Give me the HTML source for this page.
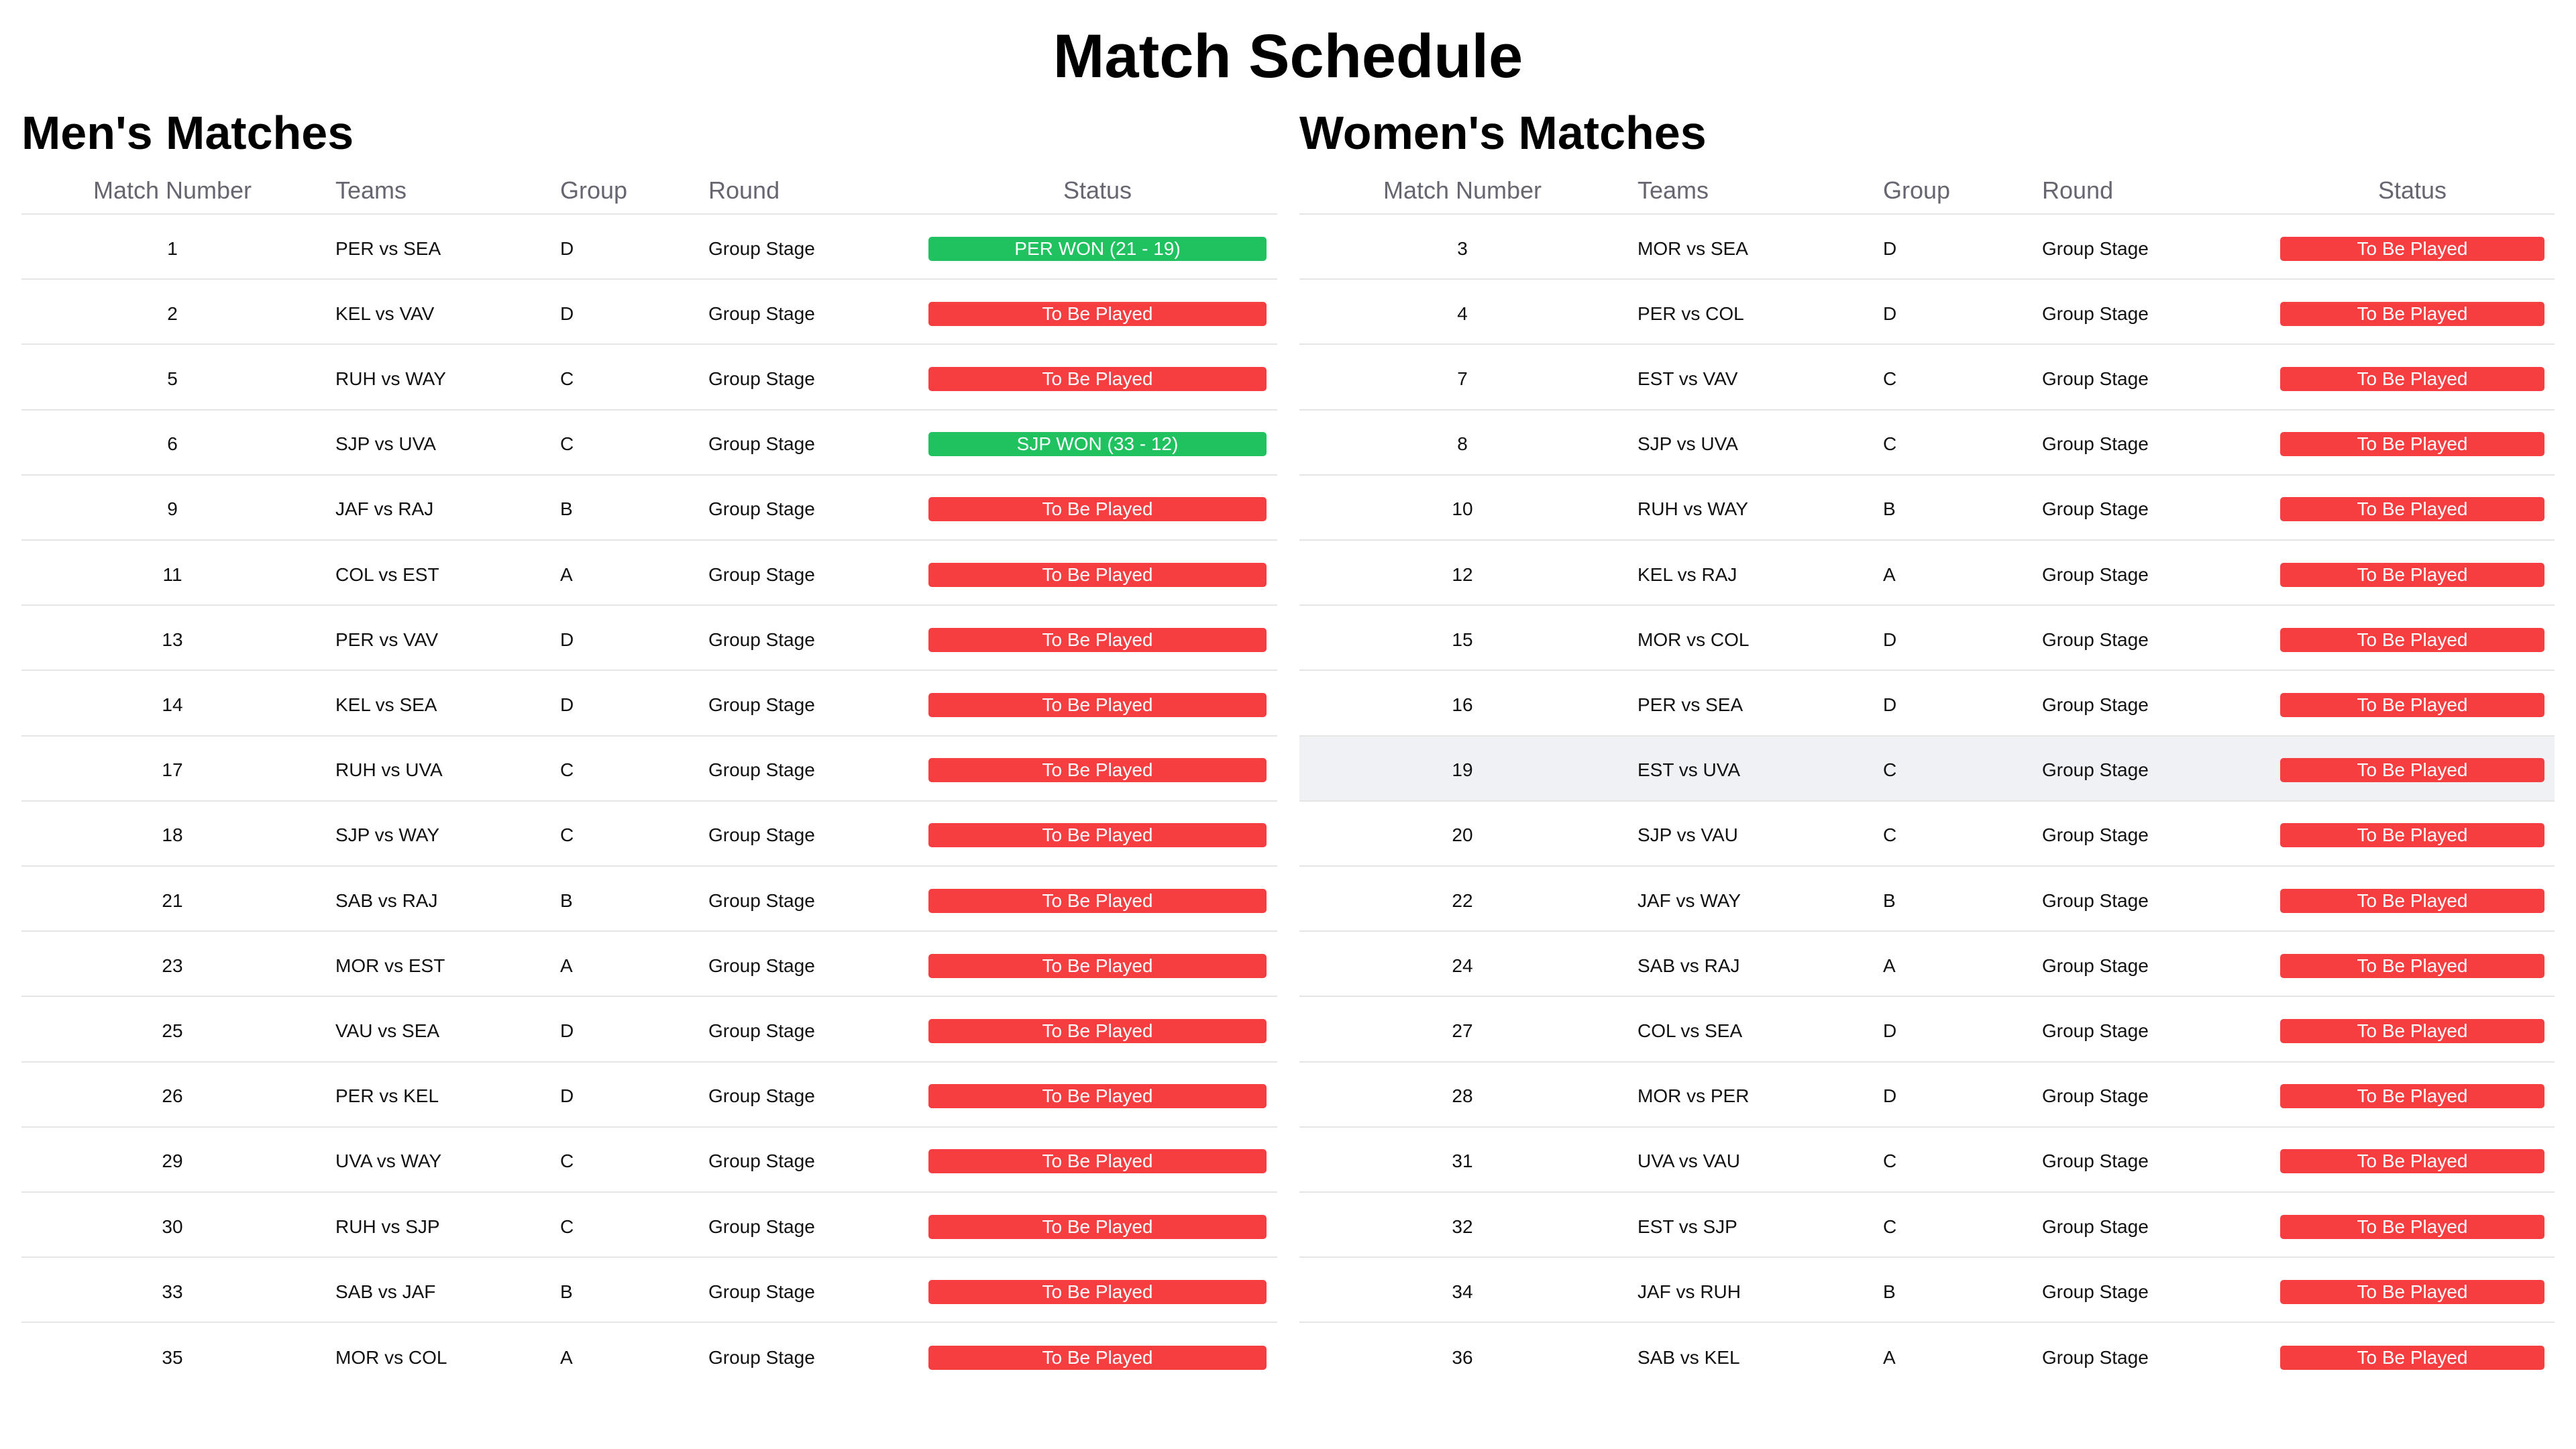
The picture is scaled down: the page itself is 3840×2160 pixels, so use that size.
<!DOCTYPE html>
<html><head><meta charset="utf-8">
<style>
*{margin:0;padding:0;box-sizing:border-box}
body{width:3840px;height:2160px;background:#fff;font-family:"Liberation Sans",Arial,sans-serif;color:#111;position:relative;overflow:hidden}
h1{position:absolute;left:0;width:3840px;top:32px;text-align:center;font-size:92px;font-weight:bold;color:#000}
h2{position:absolute;top:158px;font-size:70px;font-weight:bold;color:#000}
.t{position:absolute;top:250px}
.hd,.r{position:absolute;left:0;display:flex;align-items:center}
.hd{top:0;height:70px;border-bottom:2px solid #e5e5e5;color:#666670;font-size:36px}
.r{height:97.2px;border-bottom:2px solid #e5e5e5;font-size:28px;padding-top:6px}
.r.last{border-bottom:none}
.r.hl{background:#f0f1f4}
.c{flex:none;padding-left:18px;white-space:nowrap}
.c1{text-align:center;padding-left:0}
.b{display:block;height:36px;line-height:36px;color:#fff;border-radius:5px;font-size:28px;text-align:center}
.g{background:#1fc25f}.x{background:#f63d3f}
</style></head><body>
<h1>Match Schedule</h1>
<h2 style="left:32px">Men's Matches</h2>
<h2 style="left:1937px">Women's Matches</h2>
<div class="t" style="left:32px;width:1872px">
 <div class="hd" style="width:1872px">
  <div class="c c1" style="width:450px">Match Number</div>
  <div class="c" style="width:335px">Teams</div>
  <div class="c" style="width:221px">Group</div>
  <div class="c" style="width:328px">Round</div>
  <div class="c" style="width:538px;padding-right:16px;text-align:center">Status</div>
 </div>
</div>
<div class="t" style="left:1937px;width:1871px">
 <div class="hd" style="width:1871px">
  <div class="c c1" style="width:486px">Match Number</div>
  <div class="c" style="width:366px">Teams</div>
  <div class="c" style="width:237px">Group</div>
  <div class="c" style="width:355px">Round</div>
  <div class="c" style="width:427px;padding-right:15px;text-align:center">Status</div>
 </div>
</div>
<div class="t" style="left:32px;top:320px;width:1872px">
<div class="r" style="top:0.0px;width:1872px"><div class="c c1" style="width:450px">1</div><div class="c" style="width:335px">PER vs SEA</div><div class="c" style="width:221px">D</div><div class="c" style="width:328px">Group Stage</div><div class="c" style="width:538px;padding-right:16px"><span class="b g">PER WON (21 - 19)</span></div></div>
<div class="r" style="top:97.2px;width:1872px"><div class="c c1" style="width:450px">2</div><div class="c" style="width:335px">KEL vs VAV</div><div class="c" style="width:221px">D</div><div class="c" style="width:328px">Group Stage</div><div class="c" style="width:538px;padding-right:16px"><span class="b x">To Be Played</span></div></div>
<div class="r" style="top:194.4px;width:1872px"><div class="c c1" style="width:450px">5</div><div class="c" style="width:335px">RUH vs WAY</div><div class="c" style="width:221px">C</div><div class="c" style="width:328px">Group Stage</div><div class="c" style="width:538px;padding-right:16px"><span class="b x">To Be Played</span></div></div>
<div class="r" style="top:291.6px;width:1872px"><div class="c c1" style="width:450px">6</div><div class="c" style="width:335px">SJP vs UVA</div><div class="c" style="width:221px">C</div><div class="c" style="width:328px">Group Stage</div><div class="c" style="width:538px;padding-right:16px"><span class="b g">SJP WON (33 - 12)</span></div></div>
<div class="r" style="top:388.8px;width:1872px"><div class="c c1" style="width:450px">9</div><div class="c" style="width:335px">JAF vs RAJ</div><div class="c" style="width:221px">B</div><div class="c" style="width:328px">Group Stage</div><div class="c" style="width:538px;padding-right:16px"><span class="b x">To Be Played</span></div></div>
<div class="r" style="top:486.0px;width:1872px"><div class="c c1" style="width:450px">11</div><div class="c" style="width:335px">COL vs EST</div><div class="c" style="width:221px">A</div><div class="c" style="width:328px">Group Stage</div><div class="c" style="width:538px;padding-right:16px"><span class="b x">To Be Played</span></div></div>
<div class="r" style="top:583.2px;width:1872px"><div class="c c1" style="width:450px">13</div><div class="c" style="width:335px">PER vs VAV</div><div class="c" style="width:221px">D</div><div class="c" style="width:328px">Group Stage</div><div class="c" style="width:538px;padding-right:16px"><span class="b x">To Be Played</span></div></div>
<div class="r" style="top:680.4px;width:1872px"><div class="c c1" style="width:450px">14</div><div class="c" style="width:335px">KEL vs SEA</div><div class="c" style="width:221px">D</div><div class="c" style="width:328px">Group Stage</div><div class="c" style="width:538px;padding-right:16px"><span class="b x">To Be Played</span></div></div>
<div class="r" style="top:777.6px;width:1872px"><div class="c c1" style="width:450px">17</div><div class="c" style="width:335px">RUH vs UVA</div><div class="c" style="width:221px">C</div><div class="c" style="width:328px">Group Stage</div><div class="c" style="width:538px;padding-right:16px"><span class="b x">To Be Played</span></div></div>
<div class="r" style="top:874.8px;width:1872px"><div class="c c1" style="width:450px">18</div><div class="c" style="width:335px">SJP vs WAY</div><div class="c" style="width:221px">C</div><div class="c" style="width:328px">Group Stage</div><div class="c" style="width:538px;padding-right:16px"><span class="b x">To Be Played</span></div></div>
<div class="r" style="top:972.0px;width:1872px"><div class="c c1" style="width:450px">21</div><div class="c" style="width:335px">SAB vs RAJ</div><div class="c" style="width:221px">B</div><div class="c" style="width:328px">Group Stage</div><div class="c" style="width:538px;padding-right:16px"><span class="b x">To Be Played</span></div></div>
<div class="r" style="top:1069.2px;width:1872px"><div class="c c1" style="width:450px">23</div><div class="c" style="width:335px">MOR vs EST</div><div class="c" style="width:221px">A</div><div class="c" style="width:328px">Group Stage</div><div class="c" style="width:538px;padding-right:16px"><span class="b x">To Be Played</span></div></div>
<div class="r" style="top:1166.4px;width:1872px"><div class="c c1" style="width:450px">25</div><div class="c" style="width:335px">VAU vs SEA</div><div class="c" style="width:221px">D</div><div class="c" style="width:328px">Group Stage</div><div class="c" style="width:538px;padding-right:16px"><span class="b x">To Be Played</span></div></div>
<div class="r" style="top:1263.6px;width:1872px"><div class="c c1" style="width:450px">26</div><div class="c" style="width:335px">PER vs KEL</div><div class="c" style="width:221px">D</div><div class="c" style="width:328px">Group Stage</div><div class="c" style="width:538px;padding-right:16px"><span class="b x">To Be Played</span></div></div>
<div class="r" style="top:1360.8px;width:1872px"><div class="c c1" style="width:450px">29</div><div class="c" style="width:335px">UVA vs WAY</div><div class="c" style="width:221px">C</div><div class="c" style="width:328px">Group Stage</div><div class="c" style="width:538px;padding-right:16px"><span class="b x">To Be Played</span></div></div>
<div class="r" style="top:1458.0px;width:1872px"><div class="c c1" style="width:450px">30</div><div class="c" style="width:335px">RUH vs SJP</div><div class="c" style="width:221px">C</div><div class="c" style="width:328px">Group Stage</div><div class="c" style="width:538px;padding-right:16px"><span class="b x">To Be Played</span></div></div>
<div class="r" style="top:1555.2px;width:1872px"><div class="c c1" style="width:450px">33</div><div class="c" style="width:335px">SAB vs JAF</div><div class="c" style="width:221px">B</div><div class="c" style="width:328px">Group Stage</div><div class="c" style="width:538px;padding-right:16px"><span class="b x">To Be Played</span></div></div>
<div class="r last" style="top:1652.4px;width:1872px"><div class="c c1" style="width:450px">35</div><div class="c" style="width:335px">MOR vs COL</div><div class="c" style="width:221px">A</div><div class="c" style="width:328px">Group Stage</div><div class="c" style="width:538px;padding-right:16px"><span class="b x">To Be Played</span></div></div>
</div>
<div class="t" style="left:1937px;top:320px;width:1871px">
<div class="r" style="top:0.0px;width:1871px"><div class="c c1" style="width:486px">3</div><div class="c" style="width:366px">MOR vs SEA</div><div class="c" style="width:237px">D</div><div class="c" style="width:355px">Group Stage</div><div class="c" style="width:427px;padding-right:15px"><span class="b x">To Be Played</span></div></div>
<div class="r" style="top:97.2px;width:1871px"><div class="c c1" style="width:486px">4</div><div class="c" style="width:366px">PER vs COL</div><div class="c" style="width:237px">D</div><div class="c" style="width:355px">Group Stage</div><div class="c" style="width:427px;padding-right:15px"><span class="b x">To Be Played</span></div></div>
<div class="r" style="top:194.4px;width:1871px"><div class="c c1" style="width:486px">7</div><div class="c" style="width:366px">EST vs VAV</div><div class="c" style="width:237px">C</div><div class="c" style="width:355px">Group Stage</div><div class="c" style="width:427px;padding-right:15px"><span class="b x">To Be Played</span></div></div>
<div class="r" style="top:291.6px;width:1871px"><div class="c c1" style="width:486px">8</div><div class="c" style="width:366px">SJP vs UVA</div><div class="c" style="width:237px">C</div><div class="c" style="width:355px">Group Stage</div><div class="c" style="width:427px;padding-right:15px"><span class="b x">To Be Played</span></div></div>
<div class="r" style="top:388.8px;width:1871px"><div class="c c1" style="width:486px">10</div><div class="c" style="width:366px">RUH vs WAY</div><div class="c" style="width:237px">B</div><div class="c" style="width:355px">Group Stage</div><div class="c" style="width:427px;padding-right:15px"><span class="b x">To Be Played</span></div></div>
<div class="r" style="top:486.0px;width:1871px"><div class="c c1" style="width:486px">12</div><div class="c" style="width:366px">KEL vs RAJ</div><div class="c" style="width:237px">A</div><div class="c" style="width:355px">Group Stage</div><div class="c" style="width:427px;padding-right:15px"><span class="b x">To Be Played</span></div></div>
<div class="r" style="top:583.2px;width:1871px"><div class="c c1" style="width:486px">15</div><div class="c" style="width:366px">MOR vs COL</div><div class="c" style="width:237px">D</div><div class="c" style="width:355px">Group Stage</div><div class="c" style="width:427px;padding-right:15px"><span class="b x">To Be Played</span></div></div>
<div class="r" style="top:680.4px;width:1871px"><div class="c c1" style="width:486px">16</div><div class="c" style="width:366px">PER vs SEA</div><div class="c" style="width:237px">D</div><div class="c" style="width:355px">Group Stage</div><div class="c" style="width:427px;padding-right:15px"><span class="b x">To Be Played</span></div></div>
<div class="r hl" style="top:777.6px;width:1871px"><div class="c c1" style="width:486px">19</div><div class="c" style="width:366px">EST vs UVA</div><div class="c" style="width:237px">C</div><div class="c" style="width:355px">Group Stage</div><div class="c" style="width:427px;padding-right:15px"><span class="b x">To Be Played</span></div></div>
<div class="r" style="top:874.8px;width:1871px"><div class="c c1" style="width:486px">20</div><div class="c" style="width:366px">SJP vs VAU</div><div class="c" style="width:237px">C</div><div class="c" style="width:355px">Group Stage</div><div class="c" style="width:427px;padding-right:15px"><span class="b x">To Be Played</span></div></div>
<div class="r" style="top:972.0px;width:1871px"><div class="c c1" style="width:486px">22</div><div class="c" style="width:366px">JAF vs WAY</div><div class="c" style="width:237px">B</div><div class="c" style="width:355px">Group Stage</div><div class="c" style="width:427px;padding-right:15px"><span class="b x">To Be Played</span></div></div>
<div class="r" style="top:1069.2px;width:1871px"><div class="c c1" style="width:486px">24</div><div class="c" style="width:366px">SAB vs RAJ</div><div class="c" style="width:237px">A</div><div class="c" style="width:355px">Group Stage</div><div class="c" style="width:427px;padding-right:15px"><span class="b x">To Be Played</span></div></div>
<div class="r" style="top:1166.4px;width:1871px"><div class="c c1" style="width:486px">27</div><div class="c" style="width:366px">COL vs SEA</div><div class="c" style="width:237px">D</div><div class="c" style="width:355px">Group Stage</div><div class="c" style="width:427px;padding-right:15px"><span class="b x">To Be Played</span></div></div>
<div class="r" style="top:1263.6px;width:1871px"><div class="c c1" style="width:486px">28</div><div class="c" style="width:366px">MOR vs PER</div><div class="c" style="width:237px">D</div><div class="c" style="width:355px">Group Stage</div><div class="c" style="width:427px;padding-right:15px"><span class="b x">To Be Played</span></div></div>
<div class="r" style="top:1360.8px;width:1871px"><div class="c c1" style="width:486px">31</div><div class="c" style="width:366px">UVA vs VAU</div><div class="c" style="width:237px">C</div><div class="c" style="width:355px">Group Stage</div><div class="c" style="width:427px;padding-right:15px"><span class="b x">To Be Played</span></div></div>
<div class="r" style="top:1458.0px;width:1871px"><div class="c c1" style="width:486px">32</div><div class="c" style="width:366px">EST vs SJP</div><div class="c" style="width:237px">C</div><div class="c" style="width:355px">Group Stage</div><div class="c" style="width:427px;padding-right:15px"><span class="b x">To Be Played</span></div></div>
<div class="r" style="top:1555.2px;width:1871px"><div class="c c1" style="width:486px">34</div><div class="c" style="width:366px">JAF vs RUH</div><div class="c" style="width:237px">B</div><div class="c" style="width:355px">Group Stage</div><div class="c" style="width:427px;padding-right:15px"><span class="b x">To Be Played</span></div></div>
<div class="r last" style="top:1652.4px;width:1871px"><div class="c c1" style="width:486px">36</div><div class="c" style="width:366px">SAB vs KEL</div><div class="c" style="width:237px">A</div><div class="c" style="width:355px">Group Stage</div><div class="c" style="width:427px;padding-right:15px"><span class="b x">To Be Played</span></div></div>
</div>
</body></html>
